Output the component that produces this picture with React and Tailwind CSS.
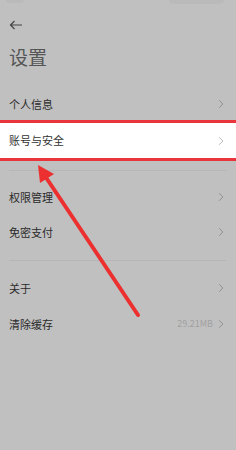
import React from "react";

const font = { fontFamily: '"Noto Sans CJK SC", "Noto Sans", sans-serif' };

function Chevron({ className = "" }) {
  return (
    <svg viewBox="0 0 8 12" className={`w-[6px] h-[10px] ${className}`} fill="none" stroke="currentColor" strokeWidth="1.2">
      <path d="M1.5 1l5 5-5 5" />
    </svg>
  );
}

function Row({ label, extra }) {
  return (
    <div className="h-9 flex items-center justify-between pl-[9px] pr-[12px]">
      <span className="text-[11px] text-[#2a2a2a]">{label}</span>
      <div className="flex items-center gap-[5px] text-[#8a8a8a]">
        {extra && <span className="text-[9px] text-[#a0a0a0]">{extra}</span>}
        <Chevron />
      </div>
    </div>
  );
}

export default function App() {
  return (
    <div className="relative w-[236px] h-[450px] bg-[#c0c0c0] overflow-hidden" style={font}>
      {/* faint status bar */}
      <div className="flex justify-between px-[6px] h-[6px]">
        <div className="w-[18px] h-[3px] bg-[#bababa] rounded-b" />
        <div className="w-[55px] h-[4px] bg-[#bababa] rounded-b mr-[6px]" />
      </div>

      <div className="h-[38px] flex items-center pl-[9px]">
        <svg viewBox="0 0 14 10" className="w-[14px] h-[10px] text-[#444]" fill="none" stroke="currentColor" strokeWidth="1.2">
          <path d="M13 5H1.5M5.5 1L1.5 5l4 4" />
        </svg>
      </div>

      <div className="h-[24px] flex items-center pl-[9px] text-[19px] text-[#555] leading-none">设置</div>

      <div className="mt-[18px]">
        <Row label="个人信息" />
      </div>

      <div className="-mt-[2px] h-[41px] bg-white border-y-[3px] border-[#e8343a] flex items-center justify-between pl-[9px] pr-[12px]">
        <span className="text-[11px] text-[#333]">账号与安全</span>
        <Chevron className="text-[#b0b0b0]" />
      </div>

      <div className="h-[18px] flex items-center px-[9px]">
        <div className="w-full h-px bg-[#b6b6b6]" />
      </div>

      <Row label="权限管理" />
      <div className="-mt-[1px]">
        <Row label="免密支付" />
      </div>

      <div className="h-[20px] flex items-center px-[9px]">
        <div className="w-full h-px bg-[#b6b6b6]" />
      </div>

      <Row label="关于" />
      <Row label="清除缓存" extra="29.21MB" />

      {/* red annotation arrow */}
      <svg className="absolute inset-0 pointer-events-none" width="236" height="450" viewBox="0 0 236 450">
        <line x1="138" y1="315" x2="45" y2="176" stroke="#ec2f2f" strokeWidth="4" strokeLinecap="round" />
        <polygon points="38,165 54,174 40,183" fill="#ec2f2f" />
      </svg>
    </div>
  );
}
